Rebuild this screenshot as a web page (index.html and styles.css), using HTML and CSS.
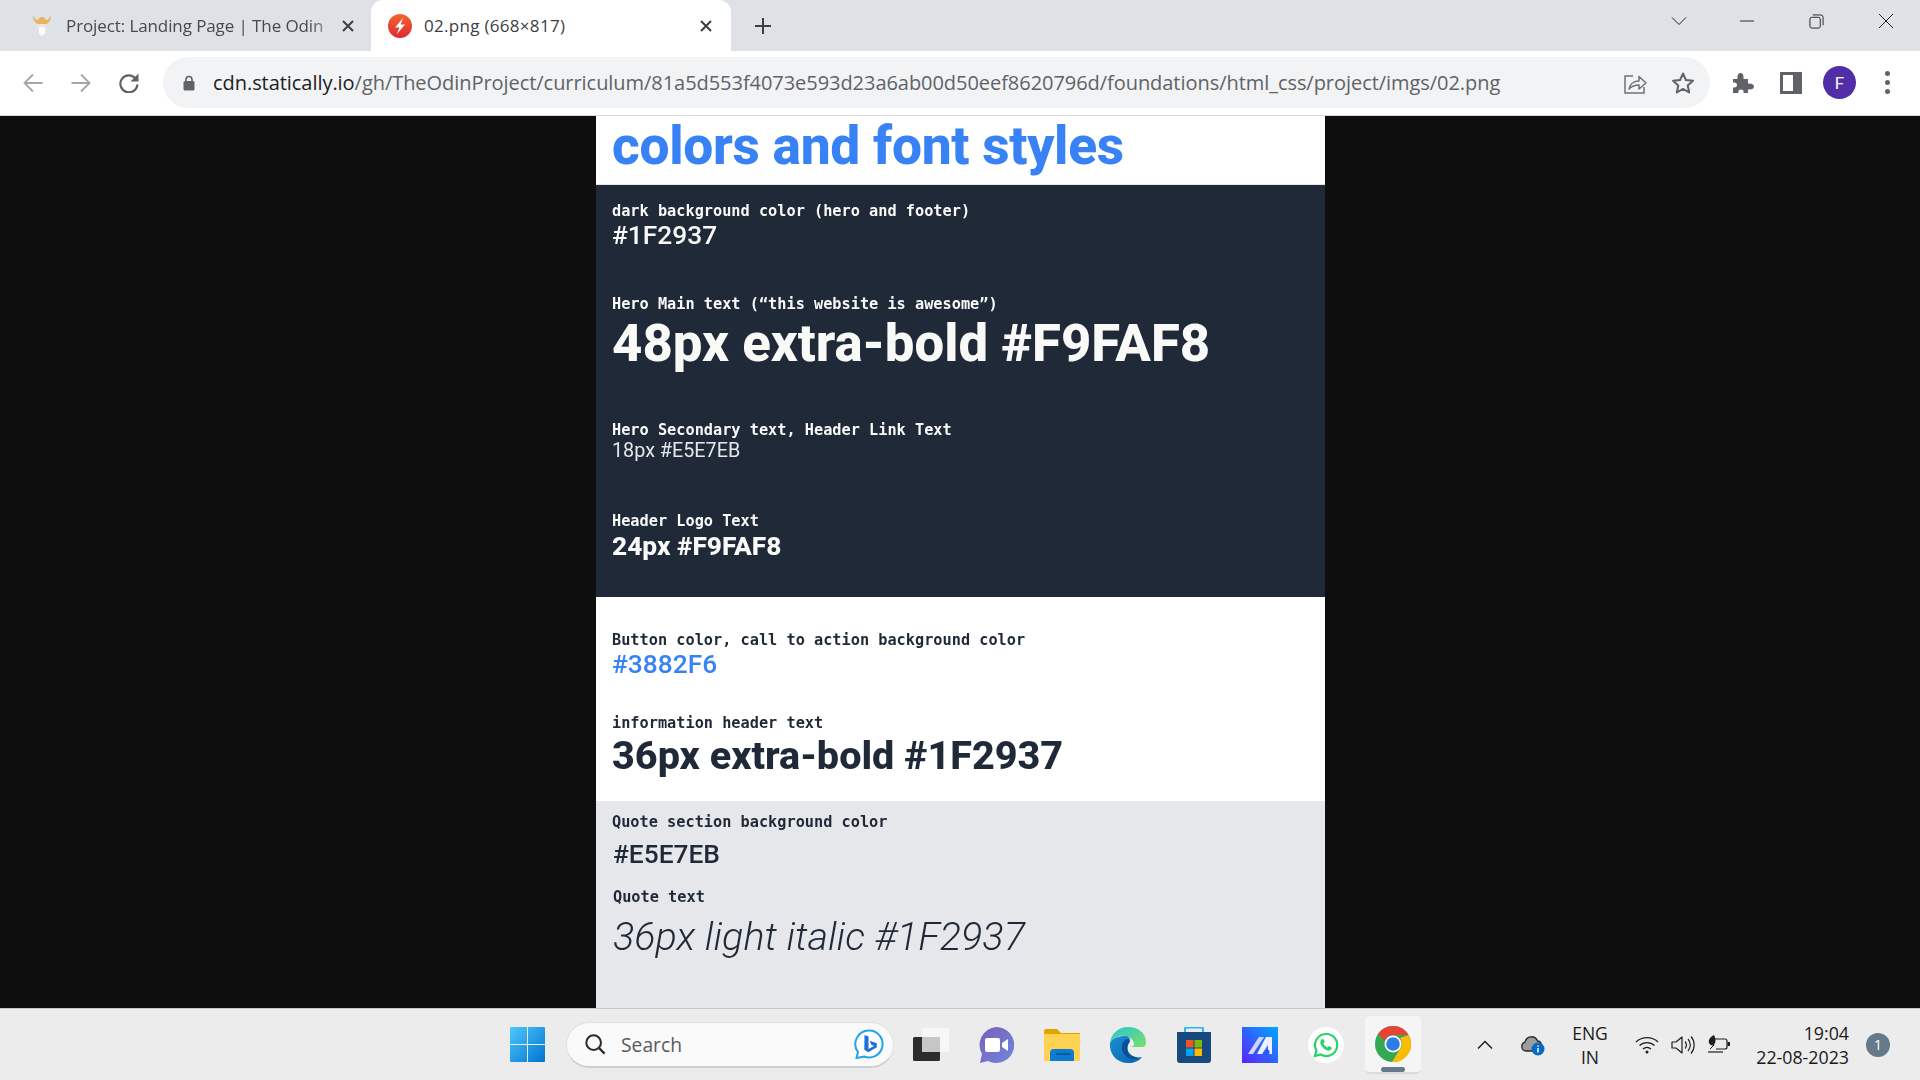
FILE: index.html
```html
<!DOCTYPE html>
<html lang="en">
<head>
<meta charset="utf-8">
<title>02.png (668×817)</title>
<link rel="stylesheet" href="styles.css">
</head>
<body>
<div class="window">
  <header class="tabstrip">
    <div class="tab tab-inactive">
      <svg class="favicon" viewBox="0 0 20 24"><path d="M1 1c0 5 2 8 5 9h8c3-1 5-4 5-9-1 3-3 5-5 5-1-2-2-3-4-3S7 4 6 6C4 6 2 4 1 1z" fill="#e9b25e"/><path d="M5 10h10v2l-1 8-4 3-4-3-1-8z" fill="#e8e6e2"/><path d="M7 13h6v6l-3 3-3-3z" fill="#fbfbf9"/></svg>
      <span class="tab-title faded">Project: Landing Page | The Odin</span>
      <svg class="tab-close" viewBox="0 0 12 12"><path d="M1 1l10 10M11 1L1 11" stroke="#3c4043" stroke-width="2" fill="none"/></svg>
    </div>
    <div class="tab tab-active">
      <svg class="favicon" viewBox="0 0 24 24"><defs><linearGradient id="st" x1="0" y1="0" x2="0" y2="1"><stop offset="0" stop-color="#f4652c"/><stop offset="1" stop-color="#dc2a35"/></linearGradient></defs><circle cx="12" cy="12" r="12" fill="url(#st)"/><path d="M15.5 3.5L7 13.5h4.5L8.5 20.5l8.5-10h-4.5z" fill="#fff"/></svg>
      <span class="tab-title">02.png (668×817)</span>
      <svg class="tab-close" viewBox="0 0 12 12"><path d="M1 1l10 10M11 1L1 11" stroke="#3c4043" stroke-width="2" fill="none"/></svg>
    </div>
    <svg class="new-tab" viewBox="0 0 18 18"><path d="M9 1v16M1 9h16" stroke="#3c4043" stroke-width="2" fill="none"/></svg>
    <div class="window-controls">
      <svg class="win-btn chev" viewBox="0 0 16 10"><path d="M1 1.5l7 7 7-7" stroke="#202124" fill="none"/></svg>
      <svg class="win-btn min" viewBox="0 0 16 2"><path d="M0 1h15" stroke="#202124" fill="none"/></svg>
      <svg class="win-btn rest" viewBox="0 0 16 16"><rect x="1" y="3.5" width="11" height="11.5" rx="2" stroke="#202124" fill="none"/><path d="M4 1h8.500a2.500 2.500 0 0 1 2.500 2.500V12" stroke="#202124" fill="none"/></svg>
      <svg class="win-btn close" viewBox="0 0 16 16"><path d="M1 1l14 14M15 1L1 15" stroke="#202124" fill="none"/></svg>
    </div>
  </header>

  <nav class="toolbar">
    <svg class="nav-icon back" viewBox="0 0 20 20"><path d="M19.500 10H2M10 1.500L1.500 10l8.500 8.500" stroke="#a3a6aa" stroke-width="1.800" fill="none"/></svg>
    <svg class="nav-icon fwd" viewBox="0 0 20 20"><path d="M0.500 10H18M10 1.500l8.500 8.500-8.500 8.500" stroke="#a3a6aa" stroke-width="1.800" fill="none"/></svg>
    <svg class="nav-icon reload" viewBox="0 0 20 20"><path d="M16.500 5.500A8.500 8.500 0 1 0 18.400 11.500" stroke="#5f6368" stroke-width="2.200" fill="none"/><path d="M19.500 0.500v8h-8z" fill="#5f6368"/></svg>
    <div class="omnibox">
      <svg class="lock" viewBox="0 0 12 16"><path d="M3 7V4.500a3 3 0 0 1 6 0V7" stroke="#5f6368" stroke-width="1.600" fill="none"/><rect x="0.500" y="6" width="11" height="9.500" rx="1.500" fill="#5f6368"/></svg>
      <span class="url"><span class="host">cdn.statically.io</span>/gh/TheOdinProject/curriculum/81a5d553f4073e593d23a6ab00d50eef8620796d/foundations/html_css/project/imgs/02.png</span>
      <svg class="omni-icon share" viewBox="0 0 24 24"><path d="M10 5H2v17h19v-6" stroke="#6f7276" stroke-width="1.500" fill="none"/><path d="M6 18c1-5 5-8 10-8V5.500L23 12l-7 6v-4c-4 0-7 1-10 4z" stroke="#6f7276" stroke-width="1.500" fill="#f1f3f4" stroke-linejoin="round"/></svg>
      <svg class="omni-icon star" viewBox="0 0 24 24"><path d="M12 2.500l2.900 6.500 7.100.8-5.300 4.700 1.500 7-6.200-3.600-6.200 3.600 1.500-7L2 9.800l7.100-.8z" stroke="#5f6368" stroke-width="2" fill="none" stroke-linejoin="round"/></svg>
    </div>
    <svg class="tool-icon puzzle" viewBox="0 0 22 22"><path d="M1 7h4.500C5 3 6.500 1 8.500 1s3.500 2 3 6H16v4.500c4-.5 6 1 6 3s-2 3.500-6 3V21h-4.500c.5-2.500-.5-3.500-2.500-3.500S6 18.500 6.500 21H1v-5.500c3 .5 4-1 4-2.500s-1-3-4-2.500z" fill="#5f6368"/></svg>
    <svg class="tool-icon panel" viewBox="0 0 22 22"><path d="M0 0h22v22H0z" fill="#5f6368"/><path d="M3 3h10v16H3z" fill="#fff"/></svg>
    <div class="avatar">F</div>
    <div class="dots"><i></i><i></i><i></i></div>
  </nav>

  <main class="viewer">
    <article class="sheet">
      <section class="sec sec-title">
        <h1 class="title">colors and font styles</h1>
      </section>
      <section class="sec sec-dark">
        <p class="label">dark background color (hero and footer)</p>
        <p class="val-a">#1F2937</p>
        <p class="label gap-43">Hero Main text (“this website is awesome”)</p>
        <p class="val-hero">48px extra-bold #F9FAF8</p>
        <p class="label gap-46">Hero Secondary text, Header Link Text</p>
        <p class="val-sec">18px #E5E7EB</p>
        <p class="label gap-48">Header Logo Text</p>
        <p class="val-logo">24px #F9FAF8</p>
      </section>
      <section class="sec sec-white">
        <p class="label">Button color, call to action background color</p>
        <p class="val-a blue">#3882F6</p>
        <p class="label gap-33">information header text</p>
        <p class="val-info">36px extra-bold #1F2937</p>
      </section>
      <section class="sec sec-grey">
        <p class="label">Quote section background color</p>
        <p class="val-a nudge-1 gap-8">#E5E7EB</p>
        <p class="label nudge-1 gap-17">Quote text</p>
        <p class="val-quote nudge-1">36px light italic #1F2937</p>
      </section>
    </article>
  </main>

  <footer class="taskbar">
    <svg class="tb-win" viewBox="0 0 35 35"><defs><linearGradient id="w" x1="0" y1="0" x2="1" y2="1"><stop offset="0" stop-color="#4fc8fb"/><stop offset="1" stop-color="#0073d0"/></linearGradient></defs><path d="M0 1a1 1 0 0 1 1-1h16v17H0zM18 0h16a1 1 0 0 1 1 1v16H18zM0 18h17v17H1a1 1 0 0 1-1-1zM18 18h17v16a1 1 0 0 1-1 1H18z" fill="url(#w)"/></svg>
    <div class="searchbox">
      <svg class="search-ico" viewBox="0 0 24 24"><circle cx="10.500" cy="10.500" r="8" stroke="#2b2b2b" stroke-width="2.200" fill="none"/><path d="M16.500 16.500l6 6" stroke="#2b2b2b" stroke-width="2.400"/></svg>
      <span class="search-text">Search</span>
      <svg class="bing" viewBox="0 0 30 30"><path d="M15 1.500a13.500 13.500 0 1 1-5 26l-7.500 1.500 1.500-6A13.500 13.500 0 0 1 15 1.500z" fill="#fff" stroke="#1fa5ea" stroke-width="2"/><path d="M10.500 6l4 1.500v12.500l5.500-3-2.700-1.300-1.500-4 7 2.500v4l-8.500 5-4-2.500z" fill="#1d6fe0"/></svg>
    </div>
    <div class="tb-slot tb-taskview">
      <svg viewBox="0 0 36 36"><rect x="9" y="1" width="27" height="24" rx="1.500" fill="#f7f7f7"/><rect y="10" width="27" height="24" rx="1.500" fill="#2c2c2c"/><rect x="9" y="10" width="18" height="15" fill="#c6c6c6"/></svg>
    </div>
    <div class="tb-slot">
      <svg viewBox="0 0 36 36"><defs><linearGradient id="t" x1="0" y1="0" x2="1" y2="1"><stop offset="0" stop-color="#7b5fb8"/><stop offset="1" stop-color="#6f87e0"/></linearGradient></defs><path d="M18 0a18 18 0 1 1-8 34l-8 2 2-9A18 18 0 0 1 18 0z" fill="url(#t)"/><rect x="7" y="11" width="15" height="14" rx="2" fill="#fff"/><path d="M24 16l6-4v12l-6-4z" fill="#fff"/></svg>
    </div>
    <div class="tb-slot">
      <svg viewBox="0 0 36 36"><path d="M0 4a2 2 0 0 1 2-2h11l4 4h19v4H0z" fill="#e1a500"/><path d="M0 7h36v27H0z" fill="#ffd253"/><path d="M6 26a4 4 0 0 1 4-4h16a4 4 0 0 1 4 4v8H6z" fill="#0d7bd0"/><path d="M12 27h14" stroke="#07518e" stroke-width="1.500"/></svg>
    </div>
    <div class="tb-slot">
      <svg viewBox="0 0 36 36"><defs><linearGradient id="e1" x1="0" y1="0" x2="1" y2="1"><stop offset="0" stop-color="#28c5d0"/><stop offset="1" stop-color="#7be06b"/></linearGradient><linearGradient id="e2" x1="0" y1="0" x2="1" y2="1"><stop offset="0" stop-color="#1b8fd4"/><stop offset="1" stop-color="#0a62ad"/></linearGradient></defs><path d="M18 0C8 0 1 7 0 16c4-6 10-8 15-7 6 1 9 5 9 8 0 2-2 3-4 3h12c3 0 4-2 4-5C36 6 28 0 18 0z" fill="url(#e1)"/><path d="M0 16c-1 11 7 20 18 20 6 0 11-2 14-6-5 3-11 3-15-1-3-3-3-9 1-12 4-3 2-8-3-8C8 9 3 11 0 16z" fill="url(#e2)"/><path d="M17 12c-5 2-7 9-3 15 4 6 12 7 18 3-4 1-9 0-12-3-3-3-3-8-1-11 1-2 0-4-2-4z" fill="#0b4f96"/></svg>
    </div>
    <div class="tb-slot">
      <svg viewBox="0 0 36 36"><path d="M9 6V2a1.500 1.500 0 0 1 1.500-1.500h15A1.500 1.500 0 0 1 27 2v4" stroke="#28b6ec" stroke-width="2" fill="none"/><path d="M1 5h34v28a3 3 0 0 1-3 3H4a3 3 0 0 1-3-3z" fill="#164a7e"/><path d="M10 13h7.500v7.500H10z" fill="#f25325"/><path d="M18.500 13H26v7.500h-7.500z" fill="#7fba00"/><path d="M10 21.500h7.500V29H10z" fill="#00a4ef"/><path d="M18.500 21.500H26V29h-7.500z" fill="#ffb900"/></svg>
    </div>
    <div class="tb-slot">
      <svg viewBox="0 0 36 36"><defs><linearGradient id="m" x1="0" y1="1" x2="1" y2="0"><stop offset="0" stop-color="#5b22ff"/><stop offset="1" stop-color="#00a8ff"/></linearGradient></defs><path d="M0 0h36v36H0z" fill="url(#m)"/><path d="M6 27L17 10h5L11 27z" fill="#d3d6fb"/><path d="M15 27L24 10h1l5 0v17h-4V18l-6 9z" fill="#ecf0ff"/><circle cx="25" cy="25" r="2.500" fill="#2a55ff"/></svg>
    </div>
    <div class="tb-slot">
      <svg viewBox="0 0 36 36"><circle cx="18" cy="18" r="18" fill="#fff"/><path d="M18 7a11 11 0 0 0-9.500 16.500L7 29l5.700-1.500A11 11 0 1 0 18 7z" stroke="#25d366" stroke-width="2.200" fill="none"/><path d="M14 12.500c-1 .5-2 2-1.500 4 .7 3 4 6.300 7 7 2 .5 3.500-.5 4-1.500.3-.8.300-1.400 0-1.700l-2.500-1.300-1.500 1.500c-2-.7-3.500-2.200-4.200-4.200l1.500-1.400-1.200-2.600c-.3-.4-1-.5-1.600-.3z" fill="#25d366"/></svg>
    </div>
    <div class="tb-slot tb-active">
      <svg viewBox="0 0 36 36"><circle cx="18" cy="18" r="18" fill="#34a853"/><path d="M18 0a18 18 0 0 1 15.600 9H18a9 9 0 0 0-8.400 5.800L3.200 7.700A18 18 0 0 1 18 0z" fill="#ea4335"/><path d="M33.600 9A18 18 0 0 1 17 36l7.700-12.500A9 9 0 0 0 25 12z" fill="#fbbc04"/><circle cx="18" cy="18" r="8.500" fill="#fff"/><circle cx="18" cy="18" r="6.800" fill="#2f7be8"/></svg>
      <i class="tb-indicator"></i>
    </div>
    <div class="tray">
      <svg class="tr-chev" viewBox="0 0 16 10"><path d="M1 8.500l7-7 7 7" stroke="#1f1f1f" stroke-width="1.500" fill="none"/></svg>
      <svg class="tr-cloud" viewBox="0 0 24 22"><path d="M5 17a4.500 4.500 0 0 1-1-8.800A6.500 6.500 0 0 1 16.500 7 4 4 0 0 1 19 14v3z" fill="#9d9d9d" stroke="#2a2a2a" stroke-width="1.300"/><circle cx="17" cy="15" r="6.500" fill="#0a68bf"/><path d="M17 14v4.500M17 11.500v1.200" stroke="#fff" stroke-width="1.500"/></svg>
      <div class="lang"><span>ENG</span><span>IN</span></div>
      <svg class="tr-wifi" viewBox="0 0 24 18"><path d="M1 6a16 16 0 0 1 22 0M4.500 9.500a11 11 0 0 1 15 0M8 13a6 6 0 0 1 8 0" stroke="#1f1f1f" stroke-width="1.300" fill="none"/><circle cx="12" cy="16" r="1.500" fill="#1f1f1f"/></svg>
      <svg class="tr-vol" viewBox="0 0 24 20"><path d="M1 7h4l6-5v16l-6-5H1z" stroke="#1f1f1f" stroke-width="1.200" fill="none" stroke-linejoin="round"/><path d="M14 6.500a5 5 0 0 1 0 7M17 4a9 9 0 0 1 0 12M20 1.500a13 13 0 0 1 0 17" stroke="#1f1f1f" stroke-width="1.200" fill="none"/></svg>
      <svg class="tr-bat" viewBox="0 0 24 20"><path d="M7 4h11a2 2 0 0 1 2 2v6a2 2 0 0 1-2 2H9" stroke="#1f1f1f" stroke-width="1.200" fill="none"/><path d="M20.500 7H23v4h-2.500z" fill="#1f1f1f"/><path d="M7 0C3 2 1 5 2 8c1 2 3 3 5 2 2-3 2-6 0-10z" fill="#1f1f1f"/><path d="M1 17h15" stroke="#1f1f1f" stroke-width="1.200"/><path d="M3 14l4-4" stroke="#1f1f1f"/></svg>
      <div class="clock"><span>19:04</span><span>22-08-2023</span></div>
      <div class="badge">1</div>
    </div>
  </footer>
</div>
</body>
</html>
```

FILE: styles.css
```css
* { box-sizing: border-box; }
html, body { margin: 0; padding: 0; height: 100%; overflow: hidden; }
body { font-family: "Open Sans", "Noto Sans", sans-serif; }
p, h1 { margin: 0; }

.window { width: 1920px; height: 1080px; display: flex; flex-direction: column; background: #0e0e0e; }

/* tab strip */
.tabstrip { flex: 0 0 51px; background: #dee1e6; display: flex; align-items: stretch; padding-left: 30px; }
.tab { display: flex; align-items: center; height: 51px; font-size: 17px; color: #3c4043; }
.tab-inactive { width: 341px; padding-left: 2px; padding-right: 17px; }
.tab-active { width: 360px; background: #fff; border-radius: 12px 12px 0 0; padding-left: 17px; padding-right: 19px; }
.favicon { width: 24px; height: 24px; flex: none; }
.tab-inactive .favicon { width: 20px; }
.tab-title { flex: 1; margin-left: 12px; white-space: nowrap; overflow: hidden; letter-spacing: 0.3px; }
.tab-inactive .tab-title { margin-left: 14px; letter-spacing: -0.1px; }
.faded { color: #46494d; -webkit-mask-image: linear-gradient(90deg, #000 88%, transparent); mask-image: linear-gradient(90deg, #000 88%, transparent); }
.tab-close { width: 12px; height: 12px; flex: none; }
.new-tab { width: 18px; height: 18px; align-self: center; margin-left: 23px; }
.window-controls { margin-left: auto; display: flex; align-items: center; height: 42px; padding-right: 26px; }
.win-btn { flex: none; }
.chev { width: 16px; height: 10px; margin-right: 53px; }
.min { width: 15px; height: 2px; margin-right: 54px; }
.rest { width: 15px; height: 15px; margin-right: 54px; }
.close { width: 16px; height: 16px; }

/* toolbar */
.toolbar { flex: 0 0 65px; background: #fff; border-bottom: 1px solid #d9dadc; display: flex; align-items: center; padding-left: 23px; padding-bottom: 1px; }
.nav-icon { width: 20px; height: 20px; flex: none; margin-right: 28px; }
.reload { margin-right: 24px; }
.omnibox { width: 1547px; height: 51px; background: #f1f3f4; border-radius: 26px; display: flex; align-items: center; padding-left: 20px; padding-right: 15px; flex: none; }
.lock { width: 12px; height: 16px; flex: none; }
.url { margin-left: 18px; font-size: 20px; color: #5f6368; white-space: nowrap; flex: 1; letter-spacing: -0.05px; }
.host { color: #202124; }
.omni-icon { width: 24px; height: 24px; flex: none; }
.share { margin-right: 24px; }
.tool-icon { width: 22px; height: 22px; flex: none; }
.puzzle { margin-left: 22px; }
.panel { margin-left: 26px; }
.avatar { width: 33px; height: 33px; margin-left: 21px; border-radius: 50%; background: #512da8; color: #fff; font-size: 17px; display: flex; align-items: center; justify-content: center; flex: none; font-family: Roboto, sans-serif; }
.dots { margin-left: 29px; display: flex; flex-direction: column; gap: 4px; }
.dots i { display: block; width: 5px; height: 5px; border-radius: 50%; background: #5f6368; }

/* image viewer */
.viewer { flex: 1; min-height: 0; display: flex; justify-content: center; overflow: hidden; }
.sheet { width: 729px; margin-left: 1px; display: flex; flex-direction: column; font-family: Roboto, sans-serif; filter: blur(0.35px); }
.sec { padding-left: 16px; }
.sec-title { height: 69px; background: #fff; border-bottom: 1px solid #e4e5e8; }
.sec-dark { height: 412px; padding-top: 15px; background: #1f2937; color: #f9faf8; }
.sec-white { height: 204px; padding-top: 32px; background: #fff; color: #1f2937; }
.sec-grey { flex: 1; padding-top: 10px; background: #e5e7eb; color: #1f2937; }

.title { font-size: 53.300px; line-height: 60px; font-weight: 800; color: #3882f6; letter-spacing: -0.3px; }
.label { height: 20px; line-height: 22px; font-family: "DejaVu Sans Mono", monospace; font-size: 15.250px; font-weight: 700; white-space: pre; }
.val-a { height: 30px; line-height: 30px; font-size: 26.300px; font-weight: 500; }
.val-hero { height: 60px; line-height: 60px; font-size: 52.700px; font-weight: 800; }
.val-sec { height: 24px; line-height: 24px; font-size: 19.750px; color: #e5e7eb; }
.val-logo { height: 32px; line-height: 32px; font-size: 26.300px; font-weight: 800; }
.val-info { height: 44px; line-height: 48px; font-size: 39.570px; font-weight: 800; }
.val-quote { height: 50px; line-height: 50px; font-size: 39.600px; font-weight: 300; font-style: italic; margin-top: 6px; }
.blue { color: #3882f6; }
.gap-8 { margin-top: 8px; }
.gap-17 { margin-top: 17px; }
.gap-33 { margin-top: 33px; }
.gap-43 { margin-top: 43px; }
.gap-46 { margin-top: 46px; }
.gap-48 { margin-top: 47px; }
.nudge-1 { margin-left: 1px; }

/* taskbar */
.taskbar { flex: 0 0 72px; background: #ececec; border-top: 1px solid #c9c9c9; display: flex; align-items: center; padding-left: 510px; }
.tb-win { width: 35px; height: 35px; flex: none; }
.searchbox { width: 328px; height: 46px; margin-left: 21px; border-radius: 23px; background: #fafafa; border: 1px solid #e0e0e0; border-bottom: 2px solid #cfcfcf; display: flex; align-items: center; padding-left: 17px; padding-right: 9px; flex: none; }
.search-ico { width: 22px; height: 22px; flex: none; }
.search-text { margin-left: 15px; font-size: 19.300px; color: #5a5a5a; flex: 1; }
.bing { width: 30px; height: 30px; flex: none; }
.tb-slot { width: 66px; height: 58px; display: flex; align-items: center; justify-content: center; position: relative; flex: none; }
.tb-slot svg { width: 36px; height: 36px; }
.tb-taskview { margin-left: 1px; margin-right: -4px; width: 72px; }
.tb-active { background: #f5f5f5; border-radius: 5px; border-bottom: 2px solid #dcdcdc; width: 56px; margin-left: 6px; }
.tb-indicator { position: absolute; left: 16px; bottom: 0; width: 24px; height: 5px; border-radius: 3px; background: #64798a; }
.tray { display: flex; align-items: center; margin-left: 56px; color: #1a1a1a; }
.tr-chev { width: 16px; height: 10px; flex: none; }
.tr-cloud { width: 24px; height: 22px; margin-left: 28px; flex: none; }
.lang { margin-left: 27px; width: 36px; display: flex; flex-direction: column; align-items: center; font-size: 17.500px; line-height: 24px; }
.tr-wifi { width: 24px; height: 18px; margin-left: 27px; flex: none; }
.tr-vol { width: 24px; height: 20px; margin-left: 12px; flex: none; }
.tr-bat { width: 24px; height: 20px; margin-left: 12px; flex: none; }
.clock { margin-left: 18px; display: flex; flex-direction: column; align-items: flex-end; font-size: 17.800px; line-height: 24px; width: 100px; white-space: nowrap; }
.badge { width: 24px; height: 24px; margin-left: 17px; border-radius: 50%; background: #64798a; color: #fff; font-size: 14px; display: flex; align-items: center; justify-content: center; flex: none; }
```
